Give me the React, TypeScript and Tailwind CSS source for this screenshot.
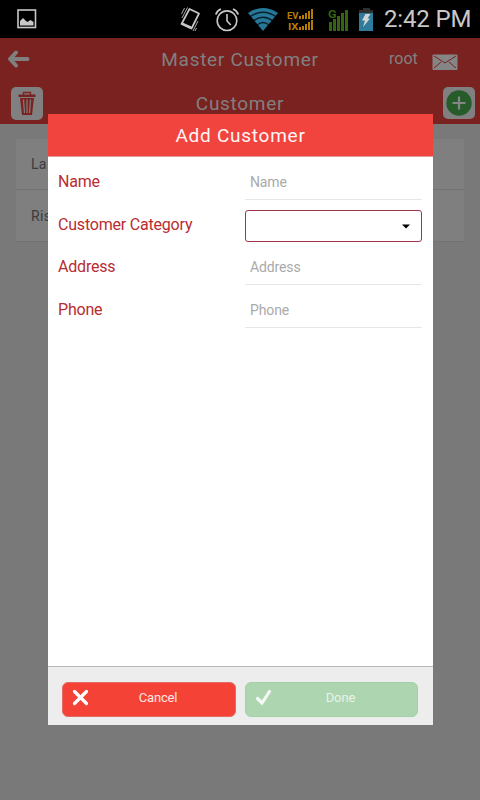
import React from "react";

function StatusBar() {
  return (
    <div className="flex h-[38px] items-center bg-black pl-[17px] pr-[10px]">
      <svg width="20" height="20" viewBox="0 0 20 20" className="shrink-0">
        <rect x="1" y="1" width="17.5" height="17.5" fill="none" stroke="#c8c8c8" strokeWidth="1.6" />
        <path d="M3 16.500V12l3-3 3 3 1.500 1 3-2 3 2v3.500z" fill="#c8c8c8" />
      </svg>
      <div className="flex-1" />
      <svg width="23" height="26" viewBox="0 0 23 26" className="mr-[13px] shrink-0">
        <path d="M10.500 3l9.500 4.500-7.500 15-10-4.500z" fill="none" stroke="#c8c8c8" strokeWidth="1.700" strokeLinejoin="round" />
        <path d="M3.500 16.500l9 4-1 2.500-9-4.500z" fill="#c8c8c8" />
        <path d="M8.500 1.500L3 12M5.500 2L2.500 8M19 15l-5 10M17.500 22l-1.500 3" fill="none" stroke="#aaa" strokeWidth="1" />
      </svg>
      <svg width="24" height="24" viewBox="0 0 24 24" className="mr-[8px] mt-[2px] shrink-0" fill="none" stroke="#c8c8c8">
        <circle cx="12" cy="12.700" r="9.800" strokeWidth="1.600" />
        <path d="M12 6v7l3.800 4" strokeWidth="1.600" />
        <path d="M.8 6.500Q2 2.500 6 1M23.200 6.500Q22 2.500 18 1" strokeWidth="1.800" />
      </svg>
      <svg width="32" height="24" viewBox="0 0 32 24" className="mr-[8px] shrink-0">
        <path d="M1 6Q16-4 31 6L16 24z" fill="#26789a" />
        <path d="M2.500 10Q16 .5 29.500 10M6 14Q16 6.500 26 14M10 18Q16 13 22 18" fill="none" stroke="#000" strokeOpacity="0.75" strokeWidth="1.400" />
      </svg>
      <svg width="27" height="22" viewBox="0 0 27 22" className="mr-[14px] mt-px shrink-0" fill="#b87d00">
        <text x="0" y="10" fontSize="9.5" fontWeight="700" textLength="11.500" lengthAdjust="spacingAndGlyphs">EV</text>
        <text x="1" y="21" fontSize="9.5" fontWeight="700" textLength="10.500" lengthAdjust="spacingAndGlyphs">IX</text>
        <g shapeRendering="crispEdges">
          <path d="M12 7h2v3h-2zM15 6h2v4h-2zM18 4h2v6h-2zM21 2h2v8h-2zM24 0h2v10h-2z" />
          <path d="M12 18h2v3h-2zM15 17h2v4h-2zM18 15h2v6h-2zM21 13h2v8h-2zM24 11h2v10h-2z" />
        </g>
      </svg>
      <svg width="21" height="22" viewBox="0 0 21 22" className="mr-[10px] mt-px shrink-0 overflow-visible" fill="#35650f">
        <text x="0" y="9" fontSize="11.500" fontWeight="700" textLength="8.500" lengthAdjust="spacingAndGlyphs">G</text>
        <path d="M1 13h3v9H1zM5 10h3v12H5zM9 7h3v15H9zM13 4h3v18h-3zM17 1h3v21h-3z" shapeRendering="crispEdges" />
      </svg>
      <svg width="16" height="24" viewBox="0 0 16 24" className="mr-[9px] mt-px shrink-0">
        <path d="M4 0h7v2h3v3H0V2h4z" fill="#303030" />
        <path d="M0 5h14v18H0z" fill="#2e7b9c" />
        <path d="M6.500 6h5l-3 4.500H11L4 19l2-6.500H3z" fill="#d5d5d5" />
      </svg>
      <span className="w-[86px] whitespace-nowrap pt-px text-[24px] leading-[37px] tracking-[-0.15px] text-[#c8c8c8]">2:42 PM</span>
    </div>
  );
}

function PageHeader() {
  return (
    <header className="h-[86px] bg-[#7a2220] text-[#808080]">
      <div className="grid h-[43px] grid-cols-[120px_240px_120px] items-center">
        <svg width="24" height="20" viewBox="0 0 24 20" className="-mt-px ml-[7px]" fill="none" stroke="#808080" strokeWidth="4" strokeLinecap="round" strokeLinejoin="round">
          <path d="M9 3.500L3 10l6 6.500M4 10h16.500" />
        </svg>
        <h1 className="text-center text-[19px] leading-[28px] tracking-[0.7px]">Master Customer</h1>
        <div className="flex items-center pl-[29px]">
          <span className="-mt-[2px] w-[43px] text-[16px]">root</span>
          <svg width="26" height="16" viewBox="0 0 26 16" className="mt-[5px]">
            <rect x=".5" y=".5" width="25" height="15.500" rx="1" fill="#858585" />
            <path d="M2 2l11 7 11-7M2 14l7-6M24 14l-7-6" fill="none" stroke="#7a2220" strokeWidth="1" />
          </svg>
        </div>
      </div>
      <div className="grid h-[43px] grid-cols-[120px_240px_120px] items-center pt-px">
        <div className="ml-[11px] flex h-[33px] w-8 items-center justify-center rounded-[5px] bg-[#808080]">
          <svg width="18" height="25" viewBox="0 0 18 25" className="-ml-px">
            <path d="M5.500 4V1.500h7V4" fill="none" stroke="#7a2220" strokeWidth="1.300" />
            <path d="M.5 3.500h17V6H.5zM2 7h14l-2 17H4z" fill="#7a2220" />
            <path d="M5.500 8.500l1 13.500M9 8.500V22M12.500 8.500l-1 13.500" stroke="#808080" strokeWidth="1.200" />
          </svg>
        </div>
        <h2 className="pt-px text-center text-[19px] leading-[28px] tracking-[0.7px]">Customer</h2>
        <div className="ml-[83px] flex h-8 w-8 items-center justify-center rounded-[5px] bg-[#808080]">
          <svg width="26" height="26" viewBox="0 0 26 26">
            <circle cx="13" cy="13" r="12.700" fill="#265c29" />
            <path d="M13 6.500v13M6.500 13h13" stroke="#858585" strokeWidth="2.200" />
          </svg>
        </div>
      </div>
    </header>
  );
}

function Field({ label, type = "text" }: { label: string; type?: string }) {
  return (
    <div className="grid h-[42.700px] grid-cols-[187px_177px] items-start">
      <label className="pt-[5.300px] text-[16px] leading-[20px] tracking-[-0.2px] text-[#b92c30]">{label}</label>
      {type === "select" ? (
        <div className="mt-[1px] flex h-[32px] items-center justify-end rounded-[3px] border border-[#9e3548] pr-[11px]">
          <svg width="8" height="5" viewBox="0 0 8 5"><path d="M0 .5h8L4 4.500z" fill="#000" /></svg>
        </div>
      ) : (
        <div className="h-[33px] border-b border-[#e6e6e6] pl-[5px] pt-[5px] text-[14px] leading-[20px] tracking-[-0.12px] text-[#aaa]">
          {label}
        </div>
      )}
    </div>
  );
}

function AddCustomerDialog() {
  return (
    <section className="absolute left-[48px] top-[114px] flex h-[611px] w-[385px] flex-col bg-white">
      <h2 className="h-[43px] border-b border-[#dda09d] bg-[#f2443f] text-center text-[19px] leading-[43px] tracking-[0.75px] text-[#fff6f5]">Add Customer</h2>
      <div className="flex-1 px-[10px] pt-[9.600px]">
        <Field label="Name" />
        <Field label="Customer Category" type="select" />
        <Field label="Address" />
        <Field label="Phone" />
      </div>
      <footer className="flex h-[59px] gap-[9px] border-t border-[#b8b8b8] bg-[#ededed] pl-[14px] pt-[15px]">
        <button className="flex h-[34.500px] w-[174px] items-center rounded-[6px] border border-[#e46b65] bg-[#f44336] pl-[9px] text-[13px] tracking-[-0.2px] text-[#ffe7e5]">
          <svg width="17" height="17" viewBox="0 0 17 17" className="-mt-[3px]"><path d="M2.500 2.500l12 12M14.500 2.500l-12 12" stroke="#fff" strokeWidth="3.200" strokeLinecap="round" /></svg>
          <span className="flex-1 pb-[3px] pr-[8px] text-center">Cancel</span>
        </button>
        <button className="flex h-[34.500px] w-[173px] items-center rounded-[6px] border border-[#a4d0a7] bg-[#add5b0] pl-[9px] text-[13px] tracking-[-0.1px] text-[#e8f3e8]">
          <svg width="17" height="17" viewBox="0 0 17 17" className="-mt-[3px]"><path d="M2.500 9.500l4.500 4.500L14.500 2.500" fill="none" stroke="#f5f8f5" strokeWidth="3.200" strokeLinecap="round" /></svg>
          <span className="flex-1 pb-[3px] pr-[8px] text-center">Done</span>
        </button>
      </footer>
    </section>
  );
}

export default function App() {
  return (
    <div className="relative h-[800px] w-[480px] overflow-hidden bg-[#797979] font-[Roboto,sans-serif]">
      <StatusBar />
      <PageHeader />
      <main className="px-4 pt-[15px] text-[14px] text-[#3c3c3c]">
        {["La", "Ris"].map((name) => (
          <div key={name} className="h-[51px] border-b border-[#727272] bg-[#7f7f7f] pl-[15px] leading-[50px] tracking-[0.3px] last:h-[52px] last:leading-[53px]">{name}</div>
        ))}
      </main>
      <AddCustomerDialog />
    </div>
  );
}
